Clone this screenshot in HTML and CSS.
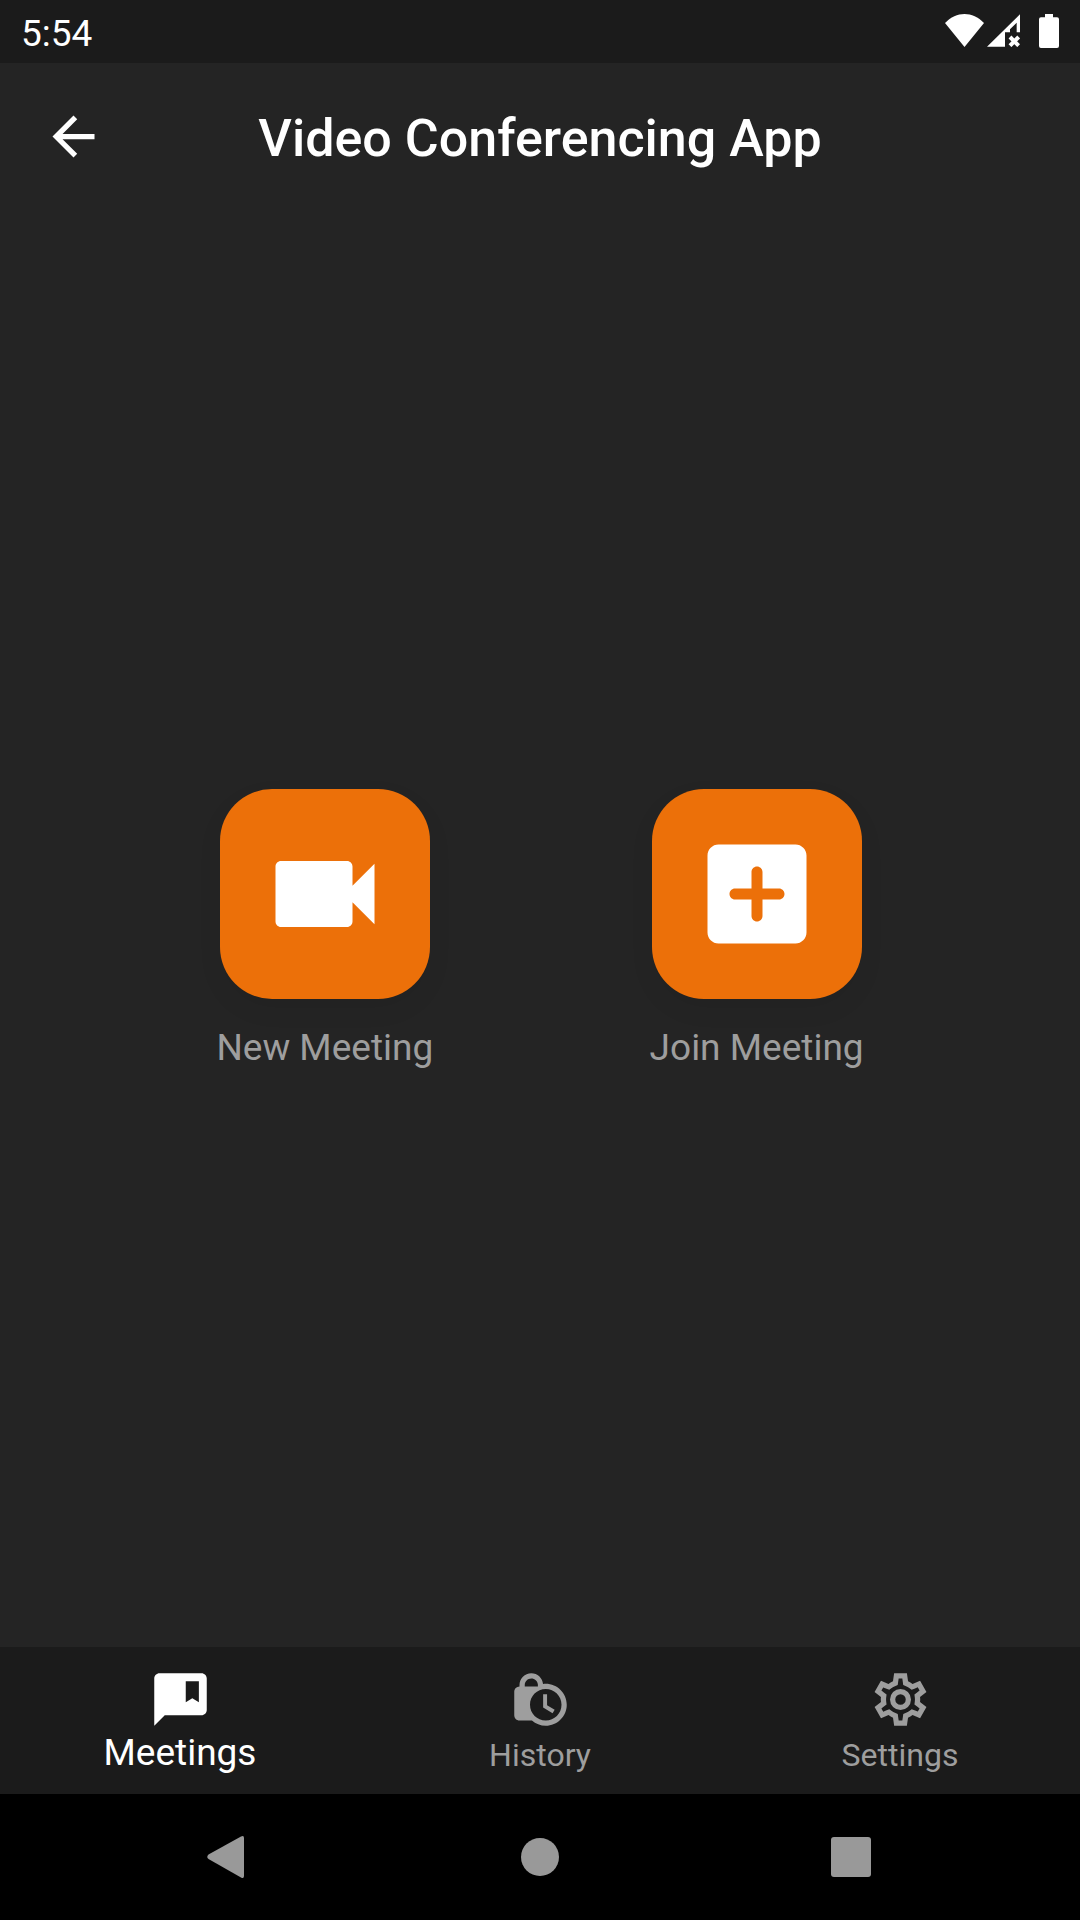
FILE: index.html
```html
<!DOCTYPE html>
<html lang="en">
<head>
<meta charset="utf-8">
<meta name="viewport" content="width=device-width, initial-scale=1">
<title>Video Conferencing App</title>
<link rel="stylesheet" href="styles.css">
</head>
<body>
<div class="status-bar">
  <time class="clock">5:54</time>
  <div class="status-icons">
    <svg class="wifi" viewBox="0 0 116 98" aria-hidden="true"><path d="M0 27C34-9 82-9 116 27L58 98z"/></svg>
    <svg class="signal" viewBox="0 0 99 99" aria-hidden="true">
      <path d="M0 98H54V55H69V46L89 26V55H99V1z"/>
      <path class="signal-off" d="M69 69L95 95M95 69L69 95"/>
    </svg>
    <svg class="battery" viewBox="0 0 60 102" aria-hidden="true"><path d="M18 0H42V10H54Q60 10 60 16V96Q60 102 54 102H6Q0 102 0 96V16Q0 10 6 10H18z"/></svg>
  </div>
</div>

<header class="app-bar">
  <button class="icon-button" type="button" aria-label="Back">
    <svg class="icon" viewBox="0 0 24 24"><path d="M20 11H7.83l5.59-5.59L12 4l-8 8 8 8 1.41-1.41L7.83 13H20v-2z"/></svg>
  </button>
  <h1 class="title">Video Conferencing App</h1>
</header>

<main class="actions">
  <button class="action" type="button">
    <span class="tile">
      <svg class="tile-icon" viewBox="0 0 24 24" aria-hidden="true"><path d="M17 10.5V7c0-.55-.45-1-1-1H4c-.55 0-1 .45-1 1v10c0 .55.45 1 1 1h12c.55 0 1-.45 1-1v-3.500l4 4v-11l-4 4z"/></svg>
    </span>
    <span class="action-label">New Meeting</span>
  </button>
  <button class="action" type="button">
    <span class="tile">
      <svg class="tile-icon" viewBox="0 0 24 24" aria-hidden="true"><path d="M19 3H5c-1.110 0-2 .9-2 2v14c0 1.100.89 2 2 2h14c1.100 0 2-.9 2-2V5c0-1.100-.9-2-2-2zm-3 10h-3v3c0 .55-.45 1-1 1s-1-.45-1-1v-3H8c-.55 0-1-.45-1-1s.45-1 1-1h3V8c0-.55.45-1 1-1s1 .45 1 1v3h3c.55 0 1 .45 1 1s-.45 1-1 1z"/></svg>
    </span>
    <span class="action-label">Join Meeting</span>
  </button>
</main>

<nav class="tabs" aria-label="Main">
  <a class="tab tab-active" href="#meetings" aria-current="page">
    <svg class="icon" viewBox="0 0 24 24" aria-hidden="true"><path d="M20 2H4c-1.100 0-2 .9-2 2v18l4-4h14c1.100 0 2-.9 2-2V4c0-1.100-.9-2-2-2zm-1 11l-2.500-1.500L14 13V5h5v8z"/></svg>
    <span class="tab-label">Meetings</span>
  </a>
  <a class="tab" href="#history">
    <svg class="icon" viewBox="0 0 24 24" aria-hidden="true"><path d="M14.500 14.200l2.900 1.700-.8 1.300L13 15v-5h1.500v4.200M22 14c0 4.410-3.590 8-8 8-2.020 0-3.860-.76-5.270-2H4c-1.150 0-2-.85-2-2V9c0-1.120.89-1.960 2-2v-.5C4 4.010 6.010 2 8.500 2c2.340 0 4.240 1.790 4.460 4.080.34-.05.69-.08 1.040-.08 4.410 0 8 3.590 8 8M6 7h5v-.74C10.880 4.990 9.800 4 8.500 4 7.120 4 6 5.120 6 6.500V7m14 7c0-3.310-2.690-6-6-6s-6 2.690-6 6 2.690 6 6 6 6-2.690 6-6z"/></svg>
    <span class="tab-label">History</span>
  </a>
  <a class="tab" href="#settings">
    <svg class="icon" viewBox="0 0 24 24" aria-hidden="true"><path fill-rule="evenodd" d="M19.440 12.990c.04-.33.07-.65.07-.99s-.03-.66-.07-.99l2.450-1.900-2.430-4.220-2.870 1.160c-.52-.4-1.090-.74-1.710-1L14.440 2H9.570l-.44 3.070c-.62.26-1.190.6-1.710 1L4.560 4.890 2.120 9.110l2.440 1.920c-.04.33-.07.63-.07.97s.03.66.08.99L2.140 14.900l2.430 4.200 2.880-1.150c.53.41 1.080.73 1.700.99L9.580 22h4.850l.44-3.070c.62-.26 1.180-.57 1.710-.98l2.880 1.150 2.430-4.200zM17.450 11.270c.04.31.05.52.05.73 0 .21-.02.43-.05.73l-.14 1.130.89.7 1.080.84-.7 1.210-1.270-.51-1.040-.42-.9.68c-.43.32-.84.56-1.250.73l-1.060.43-.16 1.130-.2 1.350h-1.400l-.19-1.350-.16-1.130-1.060-.43c-.43-.18-.83-.41-1.230-.71l-.91-.7-1.060.43-1.270.51-.7-1.210 1.080-.84.89-.7-.14-1.130c-.03-.31-.05-.54-.05-.74s.02-.43.05-.73l.14-1.130-.89-.7-1.080-.84.7-1.210 1.270.51 1.040.42.9-.68c.43-.32.84-.56 1.250-.73l1.060-.43.16-1.130.2-1.350h1.390l.19 1.350.16 1.130 1.060.43c.43.18.83.41 1.230.71l.91.7 1.060-.43 1.270-.51.7 1.210-1.070.85-.89.7zM12 8a4 4 0 1 0 0 8 4 4 0 0 0 0-8zm0 2a2 2 0 1 1 0 4 2 2 0 0 1 0-4z"/></svg>
    <span class="tab-label">Settings</span>
  </a>
</nav>

<div class="system-nav">
  <button class="system-button" type="button" aria-label="System back">
    <svg class="system-icon" viewBox="0 0 44 44"><path d="M1.500 19.500L34 1.500Q37 0 37 3V41Q37 44 34 42.500L1.500 24Q-1 22 1.500 19.500z"/></svg>
  </button>
  <button class="system-button" type="button" aria-label="Home">
    <svg class="system-icon" viewBox="0 0 44 44"><circle cx="22" cy="22" r="19"/></svg>
  </button>
  <button class="system-button" type="button" aria-label="Recent apps">
    <svg class="system-icon" viewBox="0 0 44 44"><rect x="2" y="2" width="40" height="40" rx="3"/></svg>
  </button>
</div>
</body>
</html>
```
FILE: styles.css
```css
* {
  box-sizing: border-box;
}

body {
  display: flex;
  flex-direction: column;
  min-height: 100vh;
  margin: 0;
  background: #242424;
  color: #fff;
  font-family: Roboto, "Liberation Sans", sans-serif;
  font-size: 37px;
  line-height: 43px;
}

button {
  padding: 0;
  border: 0;
  background: none;
  color: inherit;
  font: inherit;
  cursor: pointer;
}

svg {
  display: block;
  fill: currentColor;
}

.status-bar {
  display: flex;
  align-items: flex-start;
  justify-content: space-between;
  height: 63px;
  padding: 12px 21px 0;
  background: #1b1b1b;
}

.status-icons {
  display: flex;
  gap: 3px;
  padding-top: 2px;
}

.wifi {
  width: 39px;
  height: 33px;
}

.signal {
  width: 33px;
  height: 33px;
}

.signal-off {
  fill: none;
  stroke: currentColor;
  stroke-width: 12;
}

.battery {
  width: 20px;
  height: 34px;
  margin-left: 16px;
}

.app-bar {
  display: grid;
  grid-template-columns: 1fr auto 1fr;
  align-items: center;
  height: 147px;
  padding: 0 42px;
}

.icon-button {
  justify-self: start;
}

.icon {
  width: 63px;
  height: 63px;
}

.title {
  margin: 0;
  padding-top: 4px;
  font-size: 52px;
  font-weight: 500;
  line-height: 62px;
}

.actions {
  display: flex;
  flex: 1;
  align-items: center;
  justify-content: space-evenly;
}

.action {
  display: flex;
  flex-direction: column;
  align-items: center;
  gap: 27px;
}

.tile {
  display: grid;
  place-items: center;
  width: 210px;
  height: 210px;
  border-radius: 52px;
  background: #ec7009;
  box-shadow: 0 10px 26px rgba(0, 0, 0, 0.06);
  color: #fff;
}

.tile-icon {
  width: 132px;
  height: 132px;
}

.action-label {
  color: #9e9e9e;
}

.tabs {
  display: flex;
  height: 147px;
  background: #1b1b1b;
}

.tab {
  display: flex;
  flex: 1;
  flex-direction: column;
  align-items: center;
  justify-content: space-between;
  padding: 21px 0 20px;
  color: #9e9e9e;
  font-size: 32px;
  line-height: 38px;
  text-decoration: none;
}

.tab-active {
  color: #fff;
  font-size: 37px;
  line-height: 43px;
}

.system-nav {
  display: flex;
  height: 126px;
  padding: 0 73px;
  background: #000;
}

.system-button {
  display: grid;
  flex: 1;
  place-items: center;
  color: #999;
}

.system-icon {
  width: 44px;
  height: 44px;
}
```
